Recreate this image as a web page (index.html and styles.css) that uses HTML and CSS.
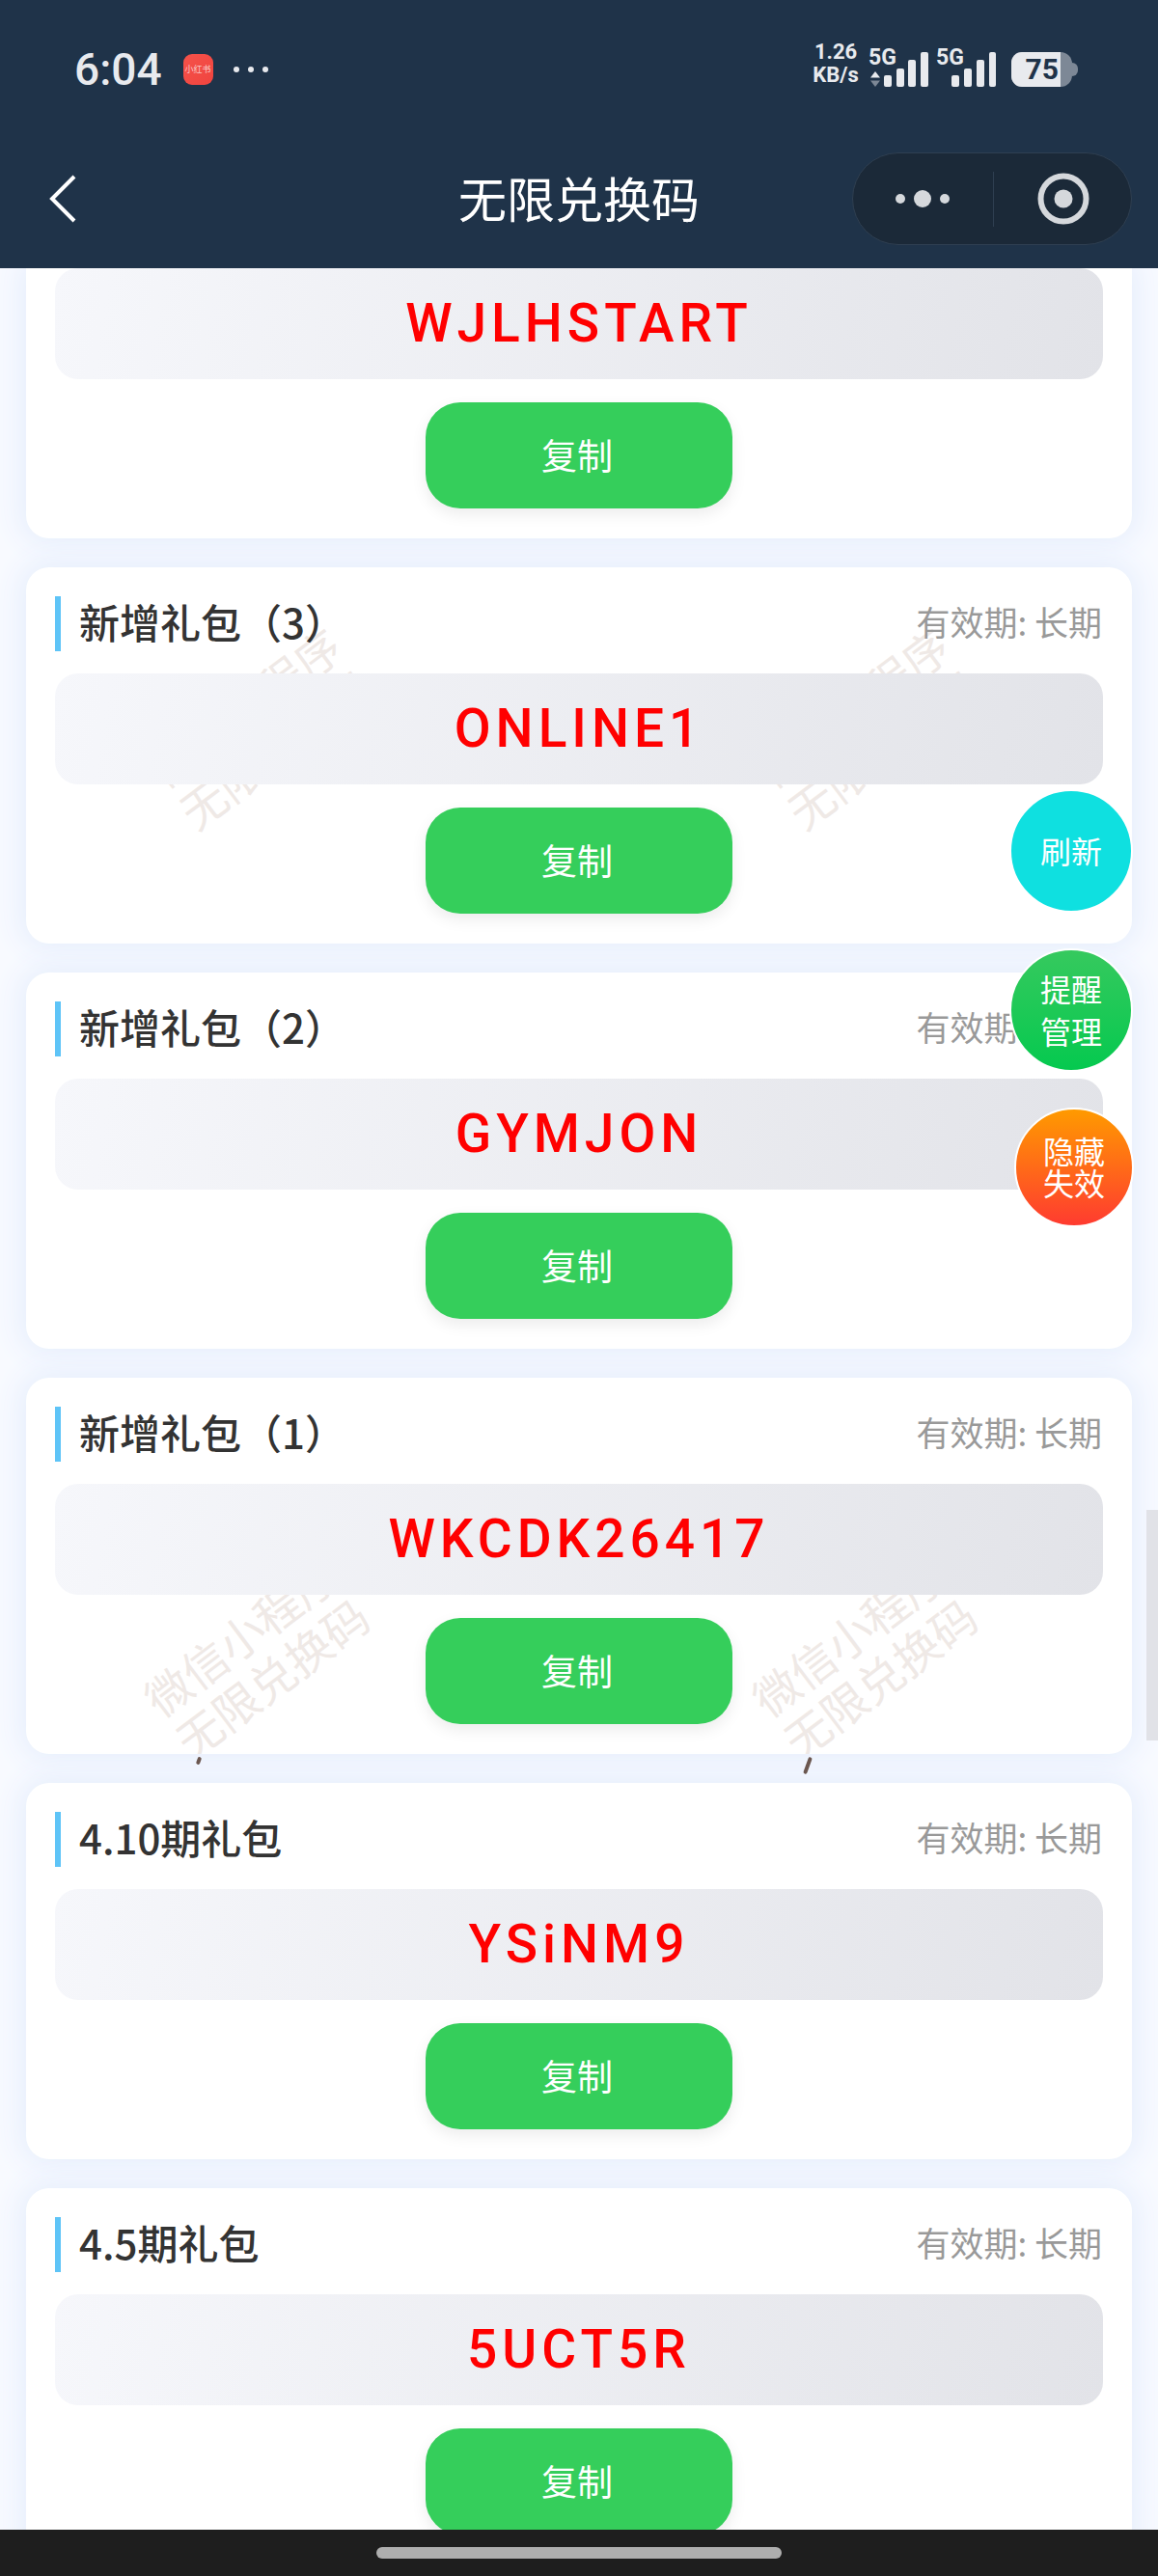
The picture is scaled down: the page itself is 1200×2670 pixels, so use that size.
FILE: index.html
```html
<!doctype html>
<html lang="zh-CN">
  <head>
    <meta charset="UTF-8" />
    <title>无限兑换码</title>
    <link rel="stylesheet" href="styles.css">
  </head>

  <body>
    <header class="top">
      <!-- Status bar -->
      <div class="status">
        <div class="status-left">
          <span class="time">6:04</span>
          <span class="app-icon">小红书</span>
          <span class="more-dots"><i></i><i></i><i></i></span>
        </div>
        <div class="status-right">
          <span class="speed">1.26<br />KB/s</span>
          <span class="net">
            <span class="net-label">5G</span>
            <svg class="arrows" width="10" height="16" viewBox="0 0 10 16">
              <path d="M5 0l5 6.500H0z" fill="#e8eaee" />
              <path d="M5 16l5-6.500H0z" fill="#7d8896" />
            </svg>
          </span>
          <svg class="bars" width="46" height="36" viewBox="0 0 46 36">
            <rect x="0" y="24" width="8" height="12" rx="2" />
            <rect x="13" y="17" width="8" height="19" rx="2" />
            <rect x="25" y="8" width="8" height="28" rx="2" />
            <rect x="38" y="0" width="8" height="36" rx="2" />
          </svg>
          <span class="net net-second">
            <span class="net-label">5G</span>
          </span>
          <svg class="bars" width="46" height="36" viewBox="0 0 46 36">
            <rect x="0" y="24" width="8" height="12" rx="2" />
            <rect x="13" y="17" width="8" height="19" rx="2" />
            <rect x="26" y="8" width="8" height="28" rx="2" />
            <rect x="39" y="0" width="7" height="36" rx="2" />
          </svg>
          <span class="battery"><span class="battery-level">75</span></span>
        </div>
      </div>

      <!-- Navigation -->
      <nav class="nav">
        <svg class="back" width="30" height="52" viewBox="0 0 30 52">
          <path d="M27 3L4 26l23 23" fill="none" stroke="#fff" stroke-width="4" />
        </svg>
        <h1 class="nav-title">无限兑换码</h1>
        <div class="capsule">
          <svg width="60" height="20" viewBox="0 0 60 20">
            <circle cx="7" cy="10" r="5" />
            <circle cx="30" cy="10" r="9" />
            <circle cx="53" cy="10" r="5" />
          </svg>
          <span class="capsule-line"></span>
          <svg width="54" height="54" viewBox="0 0 54 54">
            <circle cx="27" cy="27" r="23.500" fill="none" stroke="#d5d8dc" stroke-width="6" />
            <circle cx="27" cy="27" r="9.500" />
          </svg>
        </div>
      </nav>
    </header>

    <main class="list">
      <section class="card card-clipped">
        <div class="code">WJLHSTART</div>
        <button class="copy">复制</button>
      </section>

      <section class="card">
        <div class="watermark wm-a">微信小程序<br />无限兑换码</div>
        <div class="watermark wm-b">微信小程序<br />无限兑换码</div>
        <div class="card-head">
          <h2 class="card-title">新增礼包（3）</h2>
          <span class="expiry">有效期: 长期</span>
        </div>
        <div class="code">ONLINE1</div>
        <button class="copy">复制</button>
      </section>

      <section class="card">
        <div class="card-head">
          <h2 class="card-title">新增礼包（2）</h2>
          <span class="expiry">有效期: 长期</span>
        </div>
        <div class="code">GYMJON</div>
        <button class="copy">复制</button>
      </section>

      <section class="card">
        <div class="watermark wm-c">微信小程序<br />无限兑换码</div>
        <div class="watermark wm-d">微信小程序<br />无限兑换码</div>
        <div class="card-head">
          <h2 class="card-title">新增礼包（1）</h2>
          <span class="expiry">有效期: 长期</span>
        </div>
        <div class="code">WKCDK26417</div>
        <button class="copy">复制</button>
      </section>

      <section class="card">
        <div class="card-head">
          <h2 class="card-title">4.10期礼包</h2>
          <span class="expiry">有效期: 长期</span>
        </div>
        <div class="code">YSiNM9</div>
        <button class="copy">复制</button>
      </section>

      <section class="card">
        <div class="card-head">
          <h2 class="card-title">4.5期礼包</h2>
          <span class="expiry">有效期: 长期</span>
        </div>
        <div class="code">5UCT5R</div>
        <button class="copy">复制</button>
      </section>

      <!-- Bits of the watermark image that show between the cards -->
      <span class="speck speck-a"></span>
      <span class="speck speck-b"></span>

      <div class="scrollbar"></div>

      <div class="float-buttons">
        <button class="float float-refresh">刷新</button>
        <button class="float float-remind">提醒<br />管理</button>
        <button class="float float-hide">隐藏<br />失效</button>
      </div>
    </main>

    <footer class="home-bar"><span class="home-handle"></span></footer>
  </body>
</html>
```

FILE: styles.css
```css
* {
  box-sizing: border-box;
}

body {
  width: 1200px;
  height: 2670px;
  margin: 0;
  display: flex;
  flex-direction: column;
  overflow: hidden;
  font-family: "Noto Sans CJK SC", "Noto Sans", sans-serif;
  background-color: #f8faff;
}

/* Header */
.top {
  height: 278px;
  flex-shrink: 0;
  background-color: #1f3349;
  color: #e8eaee;
}

.status {
  height: 158px;
  display: flex;
  justify-content: space-between;
  align-items: flex-start;
  padding: 50px 83px 0 77px;
}

.status-left {
  display: flex;
  align-items: center;
  height: 44px;
}

.time {
  font-family: Roboto, sans-serif;
  font-weight: 500;
  font-size: 46px;
  line-height: 44px;
}

.app-icon {
  width: 31px;
  height: 32px;
  margin-left: 22px;
  border-radius: 9px;
  background: linear-gradient(135deg, #f5524a, #f0443f);
  color: #f9c9c6;
  font-size: 9px;
  line-height: 32px;
  text-align: center;
  white-space: nowrap;
  overflow: hidden;
}

.more-dots {
  display: flex;
  gap: 9px;
  margin-left: 21px;
}

.more-dots i {
  width: 6px;
  height: 6px;
  border-radius: 50%;
  background-color: #e8eaee;
}

.status-right {
  display: flex;
  align-items: flex-end;
  height: 40px;
}

.speed {
  width: 50px;
  font-family: Roboto, sans-serif;
  font-weight: 700;
  font-size: 22px;
  line-height: 24px;
  text-align: center;
  white-space: nowrap;
}

.net {
  width: 16px;
  margin-left: 9px;
  height: 40px;
  position: relative;
}

.net-label {
  position: absolute;
  left: 0;
  top: -2px;
  font-family: Roboto, sans-serif;
  font-weight: 700;
  font-size: 23px;
  line-height: 24px;
}

.arrows {
  position: absolute;
  left: 2px;
  bottom: 0;
}

.net-second {
  width: 16px;
  margin-left: 8px;
}

.bars {
  fill: #e8eaee;
  margin-left: -5px;
  flex-shrink: 0;
}

.net + .bars {
  margin-left: 0;
}

.battery {
  position: relative;
  width: 63px;
  height: 36px;
  margin-left: 16px;
  margin-right: 6px;
  border-radius: 11px 12px 12px 11px;
  background-color: #7d8896;
}

/* battery nub */
.battery::after {
  content: "";
  position: absolute;
  right: -6px;
  top: 11px;
  width: 6px;
  height: 14px;
  border-radius: 0 6px 6px 0;
  background-color: #7d8896;
}

.battery-level {
  display: block;
  width: 51px;
  height: 36px;
  padding-right: 2px;
  border-radius: 11px 0 0 11px;
  background-color: #e8eaee;
  color: #1f3349;
  font-family: Roboto, sans-serif;
  font-weight: 700;
  font-size: 30px;
  line-height: 36px;
  text-align: right;
}

.nav {
  height: 120px;
  position: relative;
  display: flex;
  align-items: flex-start;
  justify-content: center;
}

.back {
  position: absolute;
  left: 50px;
  top: 22px;
}

.nav-title {
  margin: 16px 0 0;
  font-size: 50px;
  line-height: 60px;
  font-weight: 400;
  color: #fff;
}

.capsule {
  position: absolute;
  left: 883px;
  top: 0;
  width: 290px;
  height: 96px;
  display: flex;
  align-items: center;
  padding-left: 42px;
  border: 1px solid #2f3f51;
  border-radius: 48px;
  background-color: #1b2938;
  fill: #d5d8dc;
}

.capsule-line {
  width: 1px;
  height: 57px;
  margin: 0 45px 0 43px;
  background-color: #2f3f51;
}

/* List */
.list {
  flex: 1;
  position: relative;
  display: flex;
  flex-direction: column;
  gap: 30px;
  padding: 0 27px;
  overflow: hidden;
}

.card {
  position: relative;
  flex-shrink: 0;
  height: 390px;
  padding: 30px 30px 0;
  border-radius: 24px;
  background-color: #fff;
  box-shadow: 0 0 30px 6px #e6eefc;
  overflow: hidden;
}

.card-clipped {
  height: 280px;
  padding-top: 0;
  border-radius: 0 0 24px 24px;
}

.card-head {
  position: relative;
  z-index: 1;
  height: 57px;
  display: flex;
  justify-content: space-between;
  align-items: center;
  padding-left: 19px;
  padding-bottom: 7px;
  margin-bottom: 23px;
  border-left: 6px solid #5ec4f7;
}

.card-title {
  margin: 0;
  font-size: 42px;
  font-weight: 500;
  color: #333;
}

.expiry {
  padding-right: 1px;
  font-size: 35px;
  color: #999;
}

.code {
  position: relative;
  z-index: 1;
  height: 115px;
  border-radius: 24px;
  background: linear-gradient(100deg, #f6f7fb, #e2e3e8);
  color: #f00;
  font-family: Roboto, sans-serif;
  font-weight: 500;
  font-size: 55px;
  line-height: 114px;
  letter-spacing: 5px;
  text-align: center;
}

.copy {
  position: relative;
  z-index: 1;
  display: block;
  width: 318px;
  height: 110px;
  margin: 24px auto 0;
  padding: 0 4px 2px 0;
  border: none;
  border-radius: 36px;
  background-color: #35ce5b;
  box-shadow: 0 6px 16px rgba(0, 0, 0, 0.08);
  color: #fff;
  font-family: inherit;
  font-size: 37px;
}

.watermark {
  position: absolute;
  width: 270px;
  color: #efe9e6;
  font-size: 47px;
  line-height: 54px;
  text-align: center;
  white-space: nowrap;
  transform: rotate(-37deg);
}

.wm-a {
  left: 107px;
  top: 112px;
}

.wm-b {
  left: 737px;
  top: 112px;
}

.wm-c {
  left: 103px;
  top: 235px;
}

.wm-d {
  left: 733px;
  top: 235px;
}

.speck {
  position: absolute;
  top: 1543px;
  width: 4px;
  height: 10px;
  border-radius: 2px;
  background-color: #6b5750;
  transform: rotate(20deg);
}

.speck-a {
  left: 204px;
  height: 8px;
}

.speck-b {
  left: 835px;
  height: 18px;
}

.scrollbar {
  position: absolute;
  right: 0;
  top: 1287px;
  width: 12px;
  height: 239px;
  background-color: #e1e2e7;
}

/* Floating buttons */
.float-buttons {
  position: absolute;
  z-index: 2;
  right: 25px;
  top: 540px;
  display: flex;
  flex-direction: column;
  align-items: flex-end;
  gap: 37px;
}

.float {
  width: 128px;
  height: 128px;
  margin-right: 1px;
  padding: 0 0 3px;
  border: 2px solid #fff;
  border-radius: 50%;
  color: #fff;
  font-family: inherit;
  font-size: 32px;
  line-height: 44px;
}

.float-refresh {
  background-color: #0fe0e0;
}

.float-remind {
  background: linear-gradient(#36c95e, #05c94f);
}

.float-hide {
  width: 124px;
  height: 124px;
  margin-right: 0;
  line-height: 33px;
  background: linear-gradient(#ff9a00, #ff3b30);
}

/* Android nav bar */
.home-bar {
  height: 48px;
  flex-shrink: 0;
  position: relative;
  z-index: 2;
  display: flex;
  justify-content: center;
  padding-top: 18px;
  background-color: #1e1e1e;
}

.home-handle {
  width: 420px;
  height: 12px;
  border-radius: 6px;
  background-color: #aeaeae;
}
```
